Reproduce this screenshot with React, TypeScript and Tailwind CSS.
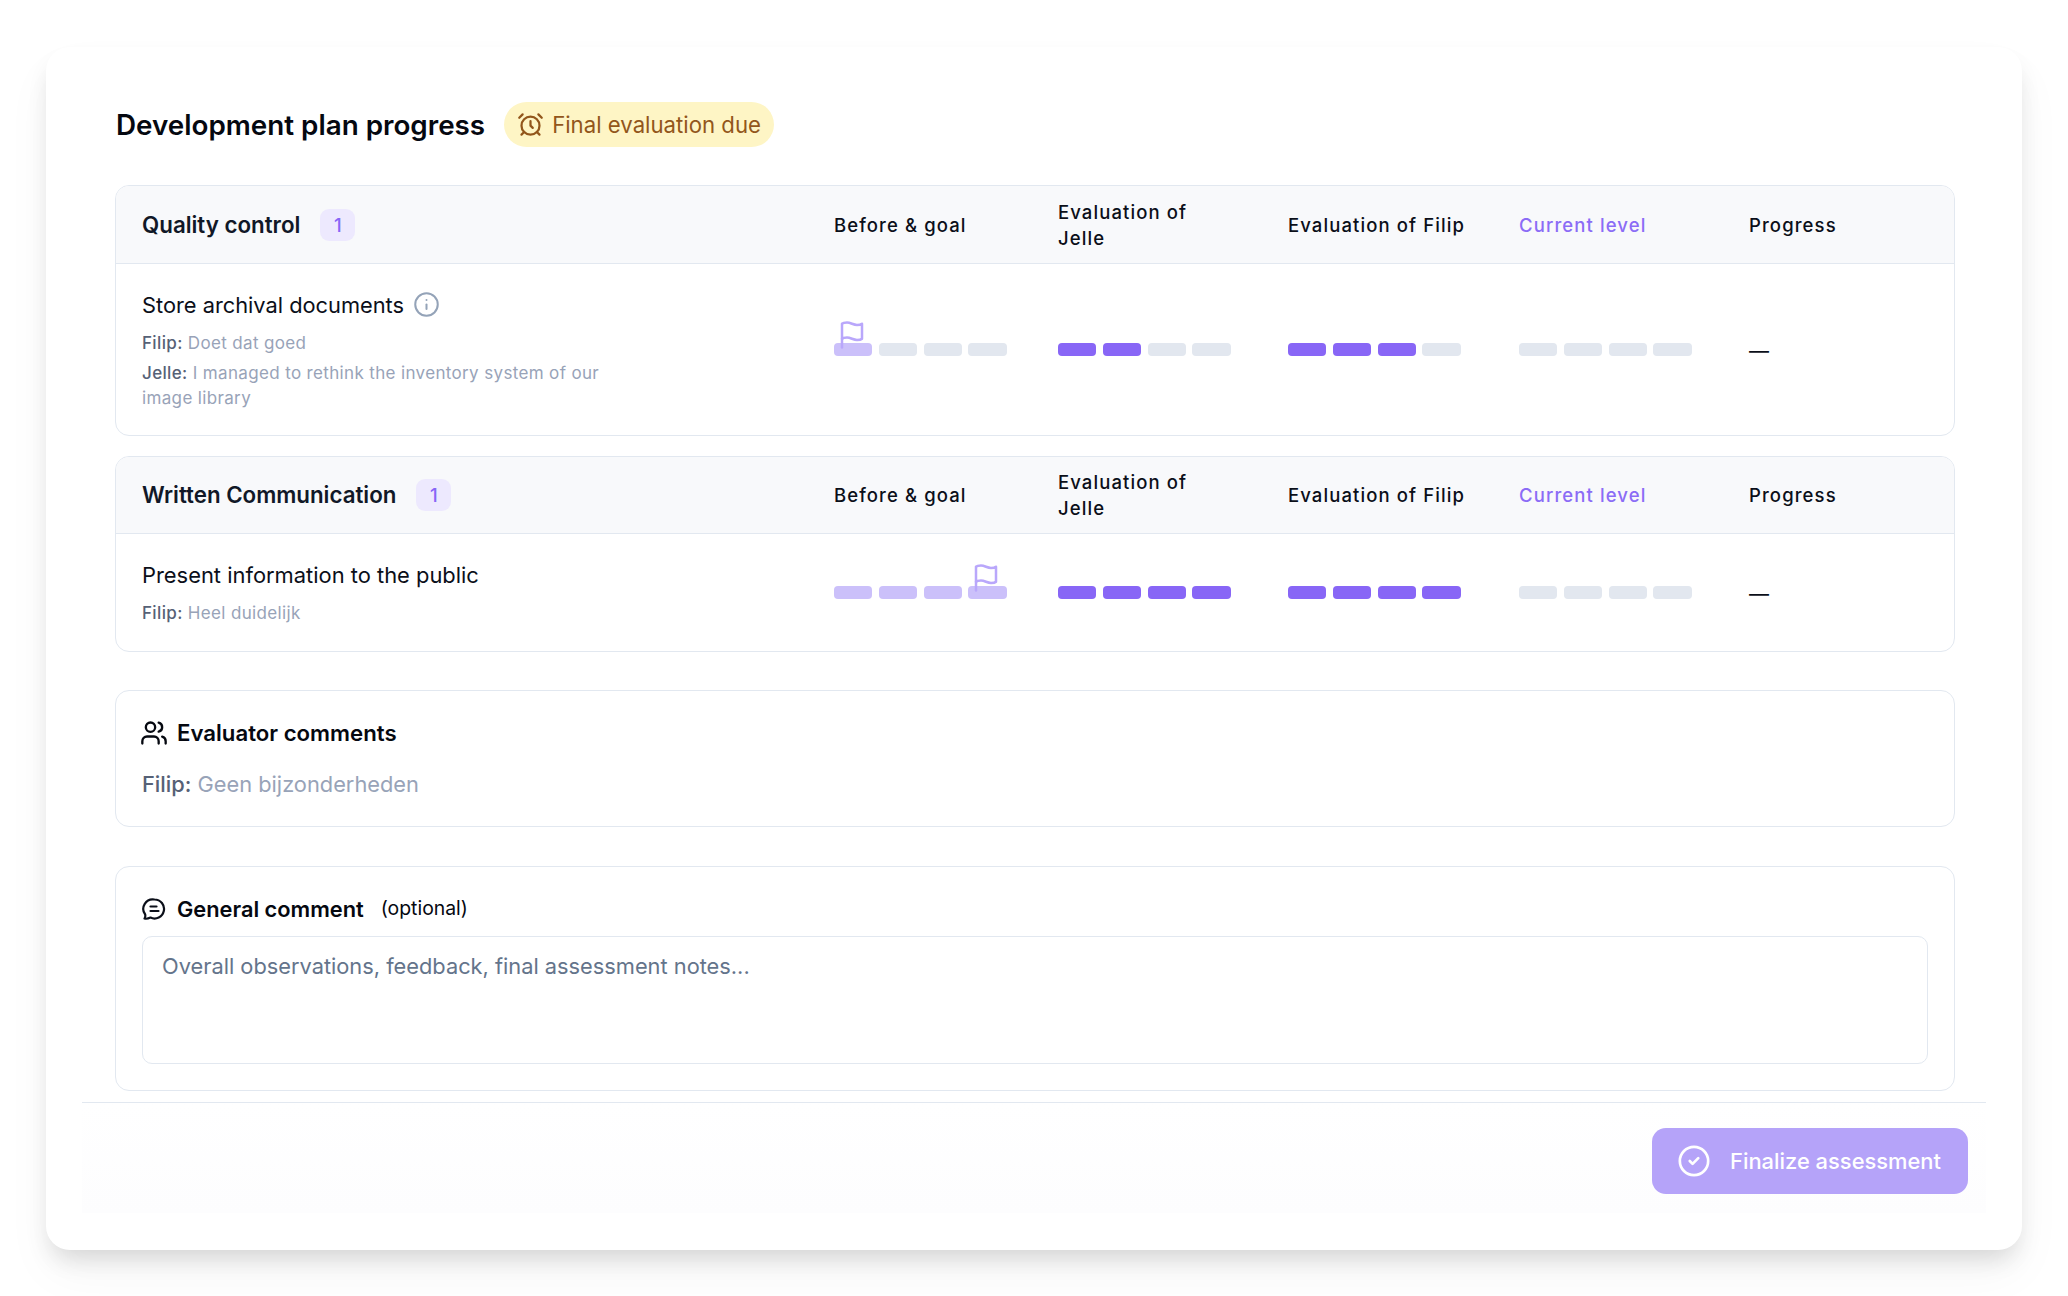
import { AlarmClock, CircleCheck, Info, Users } from "lucide-react";

const levels = [0, 1, 2, 3];

// the older lucide flag, the current one in the package has another shape
const GoalFlag = () => (
  <svg
    viewBox="0 0 24 24"
    className="absolute bottom-[6px] left-[3px] h-[30px] w-[30px]"
    fill="none"
    stroke="#b9a7fb"
    strokeWidth={2}
    strokeLinecap="round"
    strokeLinejoin="round"
  >
    <path d="M4 15s1-1 4-1 5 2 8 2 4-1 4-1V3s-1 1-4 1-5-2-8-2-4 1-4 1z" />
    <path d="M4 22v-7" />
  </svg>
);

// one row of the level meter, the flag marks the goal
const Meter = ({ filled, tone, flagAt }: { filled: number; tone: "goal" | "eval" | "none"; flagAt?: number }) => (
  <div className="relative flex w-[172.5px] gap-[6.5px]">
    {levels.map((i) => (
      <div
        key={i}
        className={`relative h-[13px] flex-1 rounded-[4px] ${
          i < filled ? (tone === "goal" ? "bg-[#cbc0fa]" : "bg-[#8866f6]") : "bg-[#e2e7ef]"
        }`}
      >
        {flagAt === i && <GoalFlag />}
      </div>
    ))}
  </div>
);

const SectionHeader = ({ title, height }: { title: string; height: string }) => (
  <div className={`grid grid-cols-[692px_224px_230px_231px_230px_1fr] items-center rounded-t-[13px] border-b border-[#e2e8f0] bg-[#f8f9fb] px-[26px] font-medium tracking-[1.1px] text-[18.5px] leading-[26px] text-[#0b0f19] ${height}`}>
    <div className="flex items-center gap-[20px]">
      <span className="text-[22.3px] font-semibold tracking-normal text-[#111827]">{title}</span>
      <span className="flex h-[32px] w-[35px] items-center justify-center rounded-[9px] bg-[#ede9fe] text-[18.5px] tracking-normal text-[#8866f6]">
        1
      </span>
    </div>
    <div>Before &amp; goal</div>
    <div className="w-[140px]">Evaluation of Jelle</div>
    <div>Evaluation of Filip</div>
    <div className="text-[#8b6cf6]">Current level</div>
    <div>Progress</div>
  </div>
);

const Note = ({ who, text }: { who: string; text: string }) => (
  <p className="w-[480px] text-[17px] leading-[25px] tracking-[0.35px] text-[#98a3b8]">
    <span className="font-medium text-[#566176]">{who}:</span> {text}
  </p>
);

const ChatIcon = () => (
  <svg viewBox="0 0 24 24" className="h-[24px] w-[24px]" fill="none" stroke="#0b0f19" strokeWidth={2.2} strokeLinecap="round" strokeLinejoin="round">
    <path d="M12.5 2.5a9.5 9.5 0 1 1-4 18.1C6.5 21.5 4 22 2.5 21.5c.8-1.2 1-2.6.7-4A9.5 9.5 0 0 1 12.5 2.5Z" />
    <path d="M8.5 9.5h6" />
    <path d="M8.5 14h8" />
  </svg>
);

export default function App() {
  return (
    <div className="h-[1296px] w-[2068px] bg-white font-['Inter',sans-serif] pl-[46px] pt-[47px]">
      <div className="relative h-[1203px] w-[1976px] rounded-[24px] bg-white pl-[69px] pr-[67px] pt-[55px] shadow-[0_14px_24px_-6px_rgba(0,0,0,0.14),0_24px_48px_rgba(0,0,0,0.04)]">
        {/* Title */}
        <div className="flex h-[45px] items-center gap-[19px] pl-[1px]">
          <h1 className="pt-[2px] text-[27.8px] font-semibold text-[#050810]">Development plan progress</h1>
          <span className="flex h-[45px] items-center gap-[8px] rounded-full bg-[#fef5c5] pl-[13px] pr-[13px] text-[22.2px] text-[#92561b]">
            <AlarmClock className="h-[27px] w-[27px]" strokeWidth={2} />
            Final evaluation due
          </span>
        </div>

        {/* Quality control */}
        <section className="mt-[38px] h-[251px] rounded-[14px] border border-[#e2e8f0]">
          <SectionHeader title="Quality control" height="h-[78px]" />
          <div className="grid h-[171px] grid-cols-[692px_224px_230px_231px_230px_1fr] items-center px-[26px]">
            <div className="pt-[2px]">
              <div className="flex items-center gap-[9px] text-[21.8px] leading-[28px] text-[#0b0f19]">
                Store archival documents
                <Info className="h-[27px] w-[27px] text-[#94a3b8]" strokeWidth={1.8} />
              </div>
              <div className="mt-[12px] space-y-[5px]">
                <Note who="Filip" text="Doet dat goed" />
                <Note who="Jelle" text="I managed to rethink the inventory system of our image library" />
              </div>
            </div>
            <Meter filled={1} tone="goal" flagAt={0} />
            <Meter filled={2} tone="eval" />
            <Meter filled={3} tone="eval" />
            <Meter filled={0} tone="none" />
            <div className="pt-[2px] text-[20px] text-[#0b0f19]">—</div>
          </div>
        </section>

        {/* Written Communication */}
        <section className="mt-[20px] h-[196px] rounded-[14px] border border-[#e2e8f0]">
          <SectionHeader title="Written Communication" height="h-[77px]" />
          <div className="grid h-[117px] grid-cols-[692px_224px_230px_231px_230px_1fr] items-center px-[26px]">
            <div className="pt-[2px]">
              <div className="text-[21.9px] leading-[28px] text-[#0b0f19]">Present information to the public</div>
              <div className="mt-[12px]">
                <Note who="Filip" text="Heel duidelijk" />
              </div>
            </div>
            <Meter filled={4} tone="goal" flagAt={3} />
            <Meter filled={4} tone="eval" />
            <Meter filled={4} tone="eval" />
            <Meter filled={0} tone="none" />
            <div className="pt-[2px] text-[20px] text-[#0b0f19]">—</div>
          </div>
        </section>

        {/* Evaluator comments */}
        <section className="mt-[38px] h-[137px] rounded-[14px] border border-[#e2e8f0] px-[26px] pt-[28px]">
          <div className="flex h-[28px] items-center gap-[9px] text-[22.2px] font-semibold text-[#050810]">
            <Users className="-ml-[2px] h-[28px] w-[28px]" strokeWidth={2} />
            Evaluator comments
          </div>
          <p className="mt-[22px] text-[21.8px] leading-[30px] text-[#98a3b8]">
            <span className="font-medium text-[#566176]">Filip:</span> Geen bijzonderheden
          </p>
        </section>

        {/* General comment */}
        <section className="mt-[39px] h-[225px] rounded-[14px] border border-[#e2e8f0] px-[26px] pt-[28px]">
          <div className="flex h-[28px] items-center text-[21.8px] font-semibold text-[#050810]">
            <ChatIcon />
            <span className="ml-[11px]">General comment</span>
            <span className="ml-[17px] text-[19.4px] font-normal">(optional)</span>
          </div>
          <textarea
            readOnly
            placeholder="Overall observations, feedback, final assessment notes..."
            className="mt-[13px] block h-[128px] w-full resize-none rounded-[10px] border border-[#e2e8f0] px-[19px] py-[14px] text-[21.8px] leading-[30px] outline-none placeholder:text-[#64748b]"
          />
        </section>

        {/* Footer */}
        <div className="absolute bottom-[37px] left-[36px] right-[36px] flex h-[111px] justify-end border-t border-[#e2e8f0] bg-gradient-to-b from-white to-[#fdfdfe] pr-[18px] pt-[25px]">
          <button className="flex h-[66px] w-[316px] items-center gap-[19px] rounded-[14px] bg-[#b5a3f9] pl-[25px] text-[21.9px] font-medium text-white">
            <CircleCheck className="h-[34px] w-[34px]" strokeWidth={1.9} />
            Finalize assessment
          </button>
        </div>
      </div>
    </div>
  );
}
